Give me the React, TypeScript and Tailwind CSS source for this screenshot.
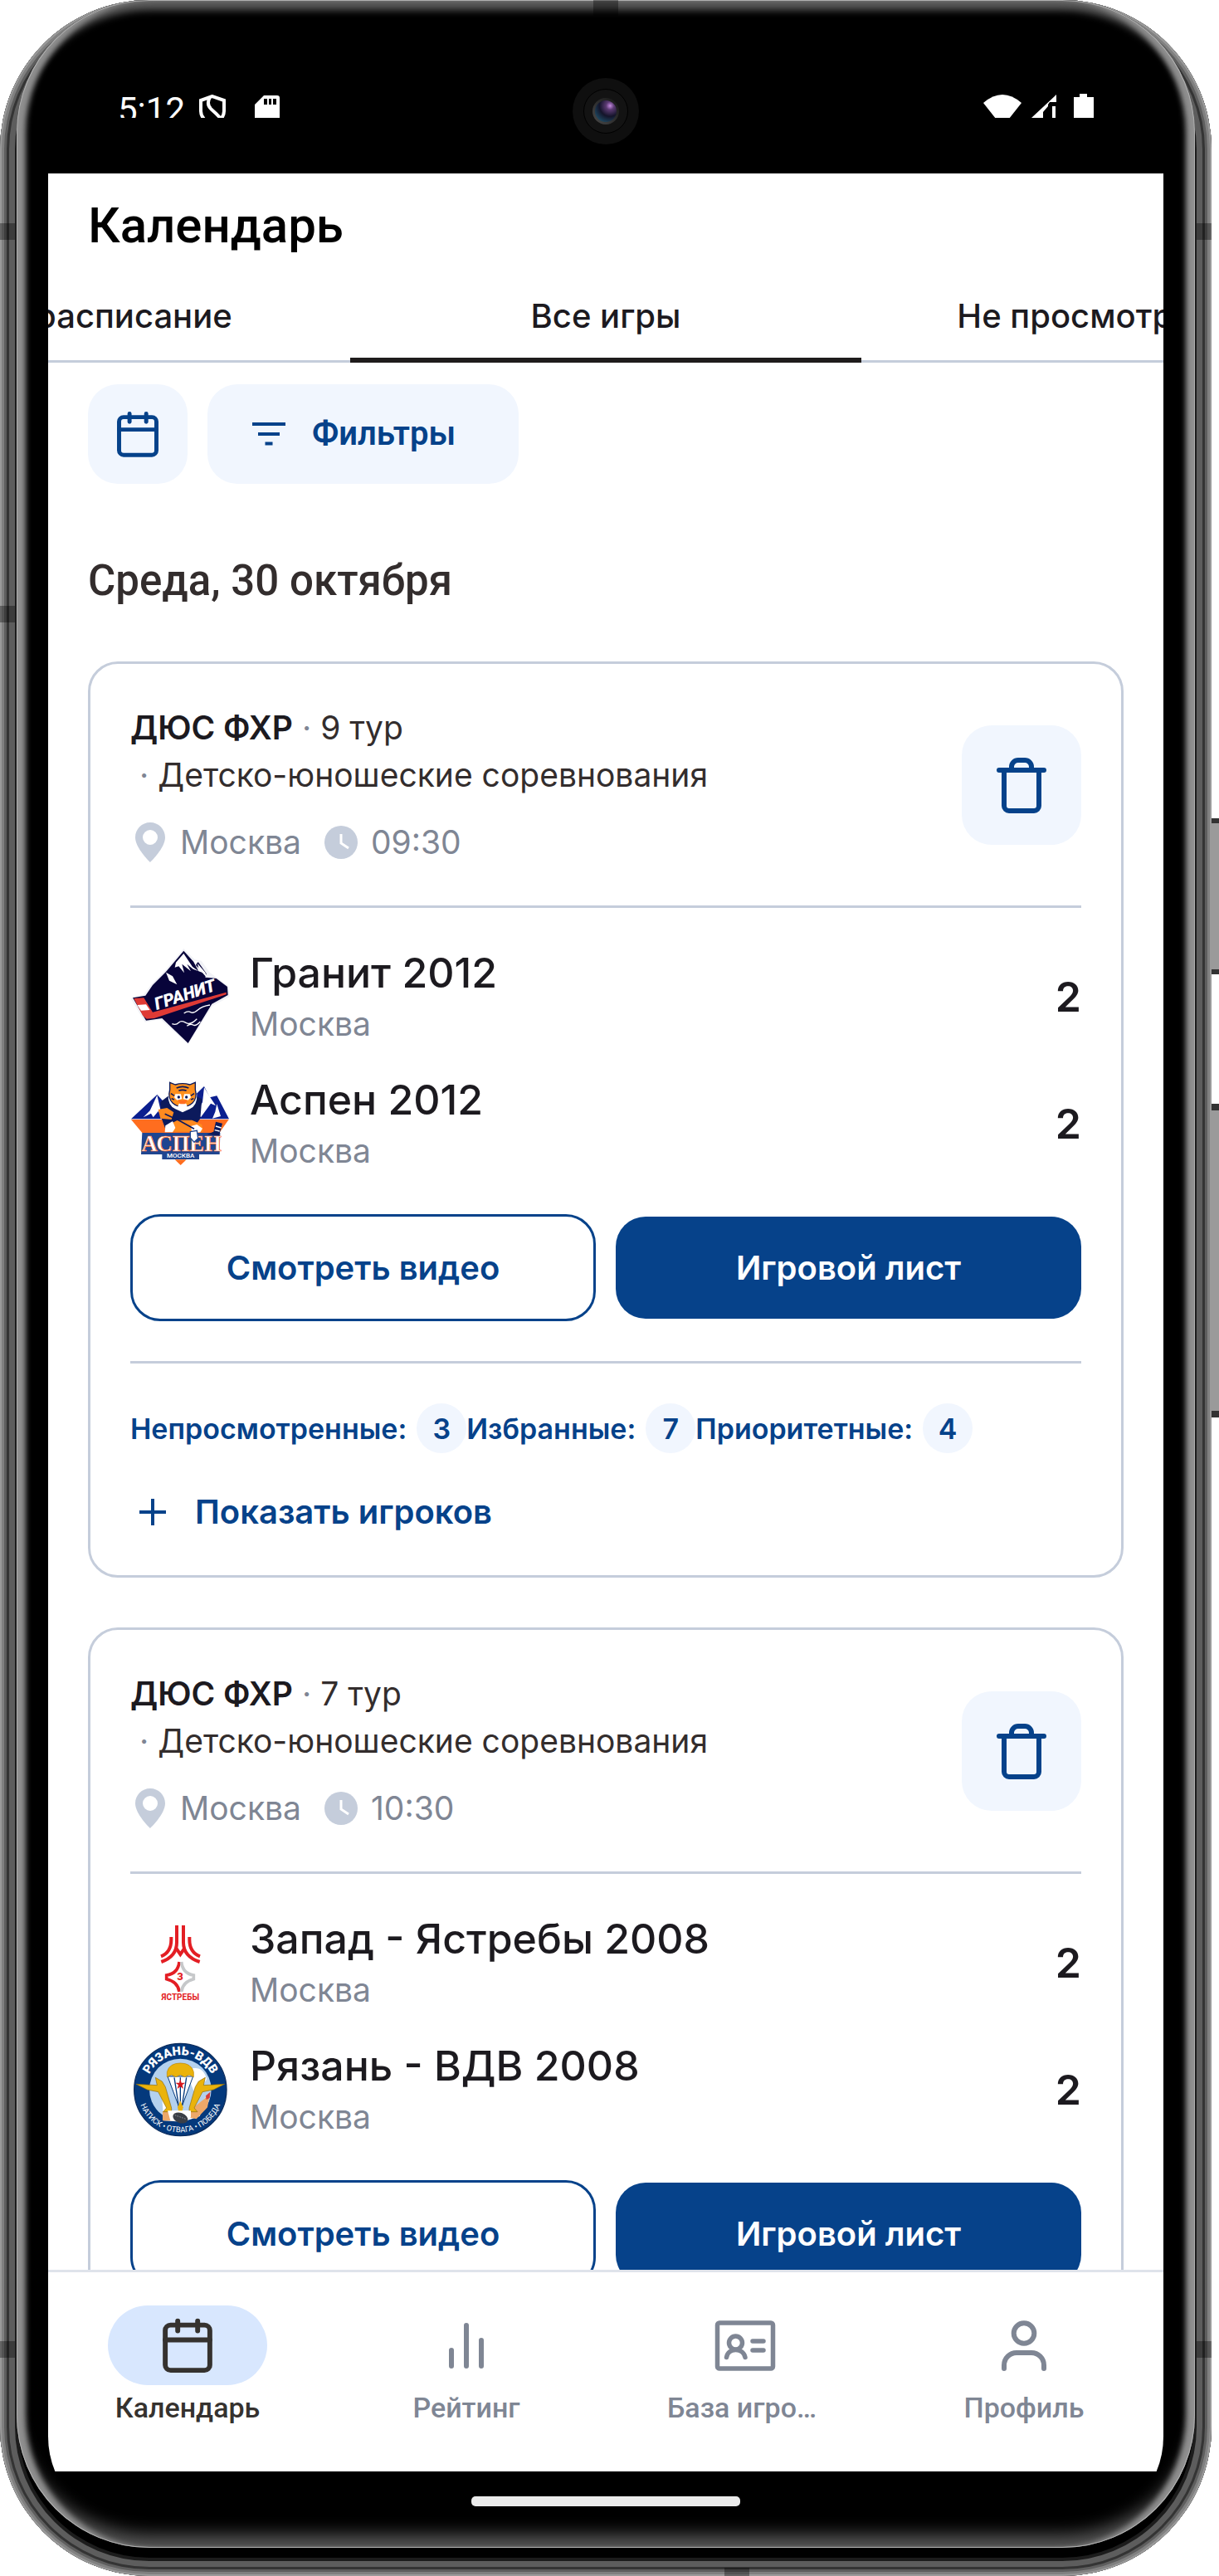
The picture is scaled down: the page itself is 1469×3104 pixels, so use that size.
import React, { useState } from 'react';

type Team = {
    name: string;
    city: string;
    score: number;
    logo: React.ReactNode;
};

type Game = {
    league: string;
    tour: string;
    category: string;
    city: string;
    time: string;
    teams: Team[];
    stats?: { label: string; count: number }[];
};

function CalendarIcon({ className }: { className: string }) {
    return (
        <svg
            viewBox="0 0 24 24"
            className={className}
            fill="none"
            stroke="currentColor"
            strokeWidth="1.65"
            strokeLinecap="round"
            aria-hidden="true"
        >
            <rect x="4.5" y="5.2" width="15" height="15.2" rx="1.8" />
            <path d="M4.5 10.2h15M8.7 3.8v3.3M15.4 3.8v3.3" />
        </svg>
    );
}

function FilterIcon() {
    return (
        <svg
            viewBox="0 0 40 30"
            className="h-[30px] w-[40px]"
            stroke="currentColor"
            strokeWidth="4"
            aria-hidden="true"
        >
            <path d="M0 3h40M7 15h26M15.500 26.500h9" />
        </svg>
    );
}

function TrashIcon() {
    return (
        <svg
            viewBox="0 0 72 72"
            className="size-[72px]"
            fill="none"
            stroke="currentColor"
            strokeWidth="6"
            strokeLinecap="round"
            aria-hidden="true"
        >
            <path d="M9 18h54M15 18v43a6 6 0 0 0 6 6h30a6 6 0 0 0 6-6V18M24 17v-3a8 8 0 0 1 8-8h8a8 8 0 0 1 8 8v3" />
        </svg>
    );
}

function PinIcon() {
    return (
        <svg
            viewBox="0 0 48 48"
            className="size-12 text-[#c5cddb]"
            fill="currentColor"
            aria-hidden="true"
        >
            <path
                fillRule="evenodd"
                d="M24 0C14 0 6 8 6 18c0 13 18 30 18 30s18-17 18-30C42 8 34 0 24 0Zm0 9a9 9 0 1 1 0 18 9 9 0 0 1 0-18Z"
            />
        </svg>
    );
}

function ClockIcon() {
    return (
        <svg viewBox="0 0 40 40" className="size-10" aria-hidden="true">
            <circle cx="20" cy="20" r="20" fill="#c5cddb" />
            <path
                d="M20 10v11l9 6"
                fill="none"
                stroke="white"
                strokeWidth="3"
            />
        </svg>
    );
}

function PlusIcon() {
    return (
        <svg
            viewBox="0 0 54 32"
            className="h-8 w-[54px]"
            stroke="currentColor"
            strokeWidth="4"
            aria-hidden="true"
        >
            <path d="M11 16h32M27 0v32" />
        </svg>
    );
}

function RatingIcon() {
    return (
        <svg
            viewBox="0 0 86 86"
            className="size-[86px]"
            stroke="currentColor"
            strokeWidth="6"
            strokeLinecap="round"
            aria-hidden="true"
        >
            <path d="M25 49v19M43 19v49M61 37v31" />
        </svg>
    );
}

function PlayersIcon() {
    return (
        <svg
            viewBox="0 0 86 86"
            className="size-[86px]"
            fill="none"
            stroke="currentColor"
            strokeWidth="5.500"
            strokeLinecap="round"
            aria-hidden="true"
        >
            <rect x="9.500" y="16" width="67" height="55" rx="2.500" />
            <circle cx="31.500" cy="40" r="8" />
            <path d="M20.500 57.500c2-12 20-12 22.500 0M52 38h13M52 49h13" />
        </svg>
    );
}

function ProfileIcon() {
    return (
        <svg
            viewBox="0 0 86 86"
            className="size-[86px]"
            fill="none"
            stroke="currentColor"
            strokeWidth="6"
            strokeLinecap="round"
            aria-hidden="true"
        >
            <circle cx="43" cy="28.500" r="12.300" />
            <path d="M19 71v-4a15 15 0 0 1 15-15h18a15 15 0 0 1 15 15v4" />
        </svg>
    );
}

function GranitLogo() {
    return (
        <svg viewBox="21 36 360 360" className="size-[120px]" aria-hidden="true">
            <path
                d="M214 42 254 82l24 4 30 42 66 48 6 40-62 34-88 138-100-90-56 10-52-86 48-14 28-38 50-50Z"
                fill="#f1f2f6"
            />
            <path
                d="M214 50 248 88l20 4 28 40-4 14 40 4 40 30 2 30-58 32-86 142-94-90-58 8-48-82 46-8 26-38 48-48Z"
                fill="#08043a"
            />
            <path
                d="m214 60-28 32-4 18 14-4 20 24-8-32 32 26-14-26 22 18 36 14-26-28 8-14-18-2 20 38-22-16Z"
                fill="white"
            />
            <path d="m150 128 12 30 28 14-16-30ZM264 96l28 32 6 20-30-34Z" fill="white" />
            <path
                d="m34 222 36-2 32 52 266-72v8L108 294l-28 2-14-12Z"
                fill="#df3a35"
            />
            <path d="m46 246 32-2 14 20-32 2Z" fill="white" />
            <path
                d="M215 276q14-10 24-4t26-8 44-18M172 314q14 6 24-4t26 0 40-14M226 322q12-10 22-4t26-12"
                fill="none"
                stroke="white"
                strokeWidth="4"
            />
            <text
                x="0"
                y="0"
                transform="translate(116 264) rotate(-18)"
                className="fill-white font-['Roboto'] text-[62px] font-black italic"
            >
                ГРАНИТ
            </text>
        </svg>
    );
}

function AspenLogo() {
    return (
        <svg viewBox="21 495 360 360" className="size-[120px]" aria-hidden="true">
            <path
                d="m24 658 94-88 28 30 70 10 72-70 20 40 26-6 44 84Z"
                fill="#0b1f8f"
            />
            <path
                d="m118 572-26 56-24 24 28-14 8 14 18-22 14 18ZM288 544l-6 54-22 36 16 18 36-50 18 8-24-36ZM334 604l14 44-30 8 10-24Z"
                fill="white"
            />
            <path d="M24 660h353l-34 48H64Z" fill="#ff6d1f" />
            <path
                d="m130 596 40-30h70l40 20-6 70-30 44H150l-18-50Z"
                fill="#0c1a5c"
            />
            <path
                d="M122 624l32-6 24 16-8 26-40-4ZM150 684l42-22 52 0 36 16 4 26H150Z"
                fill="#ff8a1f"
            />
            <path d="M148 682l26-16 10 24-10 16h-28ZM240 684l22-6 20 14-8 14-30 4Z" fill="white" />
            {/* tiger head: fur collar, face, ears, muzzle */}
            <path d="M158 568q-2 42 26 54l26 12 26-12q28-12 26-54Z" fill="white" />
            <path
                d="M164 526l20 8q26-8 52 0l20-8v26q8 30-10 48-16 14-36 14t-36-14q-18-18-10-48Z"
                fill="#ff8f1d"
                stroke="#0c1a5c"
                strokeWidth="4"
            />
            <path d="M184 568h20l4 18-18 4-10-10ZM236 568h-20l-4 18 18 4 10-10Z" fill="white" />
            <path d="M196 604q14-10 28 0l4 14q-18 10-36 0Z" fill="white" />
            <path d="M192 590h36l-10 14h-16Z" fill="#ff6d1f" />
            <path
                d="M188 546q22-10 44 0M196 556q14-6 28 0M168 566l12 8M252 566l-12 8M170 584l10 4M250 584l-10 4M146 640l52 24M198 664l54 30"
                fill="none"
                stroke="#0c1a5c"
                strokeWidth="5"
            />
            <circle cx="196" cy="579" r="5" fill="#0c1a5c" />
            <circle cx="224" cy="579" r="5" fill="#0c1a5c" />
            <path d="M64 708h282l-2 78h-74v18H136v-18H60Z" fill="#1f4590" />
            <path d="m330 668 24 6-12 44-44-4 24-10Z" fill="#0c1a5c" />
            <path d="m330 684 20 6M326 698l18 4" stroke="white" strokeWidth="4" />
            <text
                x="206"
                y="773"
                textAnchor="middle"
                strokeWidth="2"
                className="fill-white stroke-[#ff6d1f] font-['Liberation_Serif'] text-[80px] font-bold"
            >
                АСПЕН
            </text>
            <path d="m238 704 24-4 4 28-14 14-14-16Z" fill="white" stroke="#1f4590" strokeWidth="4" />
            <text
                x="203"
                y="797"
                textAnchor="middle"
                className="fill-white font-['Roboto'] text-[24px] font-medium"
            >
                МОСКВА
            </text>
            <path d="M182 805h42l-21 20Z" fill="#ff6d1f" />
        </svg>
    );
}

function YastrebyLogo() {
    return (
        <svg viewBox="51 48 360 360" className="size-[120px]" aria-hidden="true">
            <g fill="none" stroke="#e31e24" strokeWidth="12">
                <path d="M219 93v62q0 50-56 70M243 93v62q0 50 59 70" />
                <path d="M199 135v10q0 46-37 60M265 135v10q0 46 38 60" />
                <path d="m217 176 15 22 15-22" />
            </g>
            <path
                d="M228 225q-4 42-46 48v14q42 10 46 46"
                fill="none"
                stroke="#e31e24"
                strokeWidth="11"
            />
            <path
                d="M236 225q4 42 44 48v14q-40 10-44 46"
                fill="none"
                stroke="#c6c8ca"
                strokeWidth="11"
            />
            <text
                x="231"
                y="291"
                textAnchor="middle"
                className="fill-[#e31e24] font-['Roboto'] text-[36px] font-black"
            >
                З
            </text>
            <text
                x="232"
                y="363"
                textAnchor="middle"
                className="fill-[#e31e24] font-['Roboto'] text-[30px] font-bold"
            >
                ЯСТРЕБЫ
            </text>
        </svg>
    );
}

function RyazanLogo() {
    return (
        <svg viewBox="51 508 360 360" className="size-[120px]" aria-hidden="true">
            <circle cx="232" cy="688" r="167" fill="#04397c" stroke="#0a2b5c" strokeWidth="4" />
            <circle cx="232" cy="688" r="112" fill="#b4d1ee" />
            <path d="M250 620q60-30 78 30l-40 60ZM166 720l30 44h90l46-60-30 80-60 20-70-4Z" fill="white" />
            <path d="m168 766 50 0v34h-50ZM270 760l50-40 20-24-10 56-40 42-30-6Z" fill="#eda869" />
            <path d="m324 710 16-14-2 22-12 6Z" fill="#d43b3b" />
            <path d="m186 640 46 124 46-124Z" fill="white" stroke="#04397c" strokeWidth="3" />
            <path
                d="M232 644v116M210 644l18 116M254 644l-18 116"
                stroke="#04397c"
                strokeWidth="4"
            />
            <path
                d="M184 642v-18q8-32 48-32t48 32v18l-16-8-16 8-16-8-16 8-16-8Z"
                fill="#eab30c"
                stroke="#b98300"
                strokeWidth="2"
            />
            <path
                d="m72 668 76 4-6-28 24 14 12 20 22 76v14h-30l12-14-30-58-40-8ZM392 668l-76 4 6-28-24 14-12 20-22 76v14h30l-12-14 30-58 40-8Z"
                fill="#eab30c"
                stroke="#8a6a10"
                strokeWidth="2"
            />
            <path d="m222 752 10-24 10 24-4 16h-12Z" fill="#eab30c" />
            <path
                d="m232 650 4 13h14l-11 8 4 14-11-8-11 8 4-14-11-8h14Z"
                fill="#d5161c"
            />
            <path d="M186 764h84v24l-20 12h-54Z" fill="white" />
            <ellipse cx="232" cy="790" rx="28" ry="18" transform="rotate(20 232 790)" fill="#3a3f47" />
            <path d="m212 780 40 14" stroke="#8b9098" strokeWidth="3" strokeDasharray="5 4" />
            <defs>
                <path id="ryazanTop" d="M107 688a125 125 0 0 1 250 0" />
                <path id="ryazanBottom" d="M78 688a154 154 0 0 0 308 0" />
            </defs>
            <text
                textAnchor="middle"
                className="fill-white font-['Roboto'] text-[44px] font-black"
            >
                <textPath href="#ryazanTop" startOffset="50%">
                    РЯЗАНЬ-ВДВ
                </textPath>
            </text>
            <text
                textAnchor="middle"
                className="fill-white font-['Roboto'] text-[28px]"
            >
                <textPath href="#ryazanBottom" startOffset="50%">
                    НАТИСК • ОТВАГА • ПОБЕДА
                </textPath>
            </text>
        </svg>
    );
}

const games: Game[] = [
    {
        league: 'ДЮС ФХР',
        tour: '9 тур',
        category: 'Детско-юношеские соревнования',
        city: 'Москва',
        time: '09:30',
        teams: [
            { name: 'Гранит 2012', city: 'Москва', score: 2, logo: <GranitLogo /> },
            { name: 'Аспен 2012', city: 'Москва', score: 2, logo: <AspenLogo /> },
        ],
        stats: [
            { label: 'Непросмотренные:', count: 3 },
            { label: 'Избранные:', count: 7 },
            { label: 'Приоритетные:', count: 4 },
        ],
    },
    {
        league: 'ДЮС ФХР',
        tour: '7 тур',
        category: 'Детско-юношеские соревнования',
        city: 'Москва',
        time: '10:30',
        teams: [
            { name: 'Запад - Ястребы 2008', city: 'Москва', score: 2, logo: <YastrebyLogo /> },
            { name: 'Рязань - ВДВ 2008', city: 'Москва', score: 2, logo: <RyazanLogo /> },
        ],
    },
];

const tabs = ['Мое расписание', 'Все игры', 'Не просмотренные'];

const navItems = [
    { label: 'Календарь', icon: <CalendarIcon className="size-[86px]" /> },
    { label: 'Рейтинг', icon: <RatingIcon /> },
    { label: 'База игроков', icon: <PlayersIcon /> },
    { label: 'Профиль', icon: <ProfileIcon /> },
];

function StatusBar() {
    return (
        <div className="h-[209px] shrink-0">
            <div className="flex h-[142px] items-start justify-between overflow-hidden pt-[112px] pr-[84px] pl-[84px] text-white">
                <div className="flex items-start">
                    <span className="font-['Roboto'] text-[42px] leading-[42px]">
                        5:12
                    </span>
                    <svg
                        viewBox="0 0 34 40"
                        className="ml-[16px] h-[40px] w-[34px] shrink-0"
                        fill="none"
                        stroke="white"
                        strokeWidth="4"
                        aria-hidden="true"
                    >
                        <path d="M17 4 3 9v13q0 10 14 16 14-6 14-16V9ZM14 5q-5 9 2 15t12 12" />
                    </svg>
                    <svg
                        viewBox="0 0 30 40"
                        className="ml-[34px] h-[40px] w-[30px] shrink-0"
                        fill="white"
                        aria-hidden="true"
                    >
                        <path
                            fillRule="evenodd"
                            d="M11 3h16q3 0 3 3v34H0V14Zm0 4v7h4V7Zm6 0v7h3V7Zm5 0v7h4V7Z"
                        />
                    </svg>
                </div>
                <div className="flex items-start fill-white">
                    <svg viewBox="0 0 46 40" className="h-[40px] w-[46px]" aria-hidden="true">
                        <path d="M0 12Q23-8 46 12L31 31H15Z" />
                    </svg>
                    <svg
                        viewBox="0 0 30 40"
                        className="ml-[12px] h-[40px] w-[30px]"
                        aria-hidden="true"
                    >
                        <path d="M30 2v9h-8L13 24v6H0ZM0 30 20 12v4l-6 7v7ZM25 16h4v14h-4Z" />
                    </svg>
                    <svg
                        viewBox="0 0 24 40"
                        className="ml-[21px] h-[40px] w-[24px]"
                        aria-hidden="true"
                    >
                        <path d="M7 1h9v4h8v35H0V5h7Z" />
                    </svg>
                </div>
            </div>
        </div>
    );
}

function TeamRow({ team }: { team: Team }) {
    return (
        <div className="flex h-[123px] items-center">
            {team.logo}
            <div className="ml-6 flex-1">
                <h3 className="text-[50px] leading-[66px] font-medium">
                    {team.name}
                </h3>
                <p className="text-[39px] leading-[57px] text-[#7f8694]">
                    {team.city}
                </p>
            </div>
            <span className="text-[50px] leading-[66px] font-semibold">
                {team.score}
            </span>
        </div>
    );
}

function GameCard({ game }: { game: Game }) {
    return (
        <article className="shrink-0 rounded-[36px] border-[3px] border-[#c5cddb] p-12 text-[#1c1a1f]">
            <div className="flex items-center justify-between">
                <div className="text-[39px] leading-[57px]">
                    <p>
                        <span className="font-semibold">{game.league}</span>
                        <span className="text-[#7f8694]"> · </span>
                        <span className="text-[#332d2d]">{game.tour}</span>
                    </p>
                    <p className="pl-[11px] text-[#332d2d]">
                        <span className="text-[#7f8694]">· </span>
                        {game.category}
                    </p>
                    <div className="mt-6 flex items-center text-[#7f8694]">
                        <PinIcon />
                        <span className="mr-[28px] ml-3">{game.city}</span>
                        <ClockIcon />
                        <span className="ml-4">{game.time}</span>
                    </div>
                </div>
                <button
                    type="button"
                    aria-label="Удалить"
                    className="flex size-[144px] items-center justify-center rounded-[36px] bg-[#f1f6fe] text-[#06428a]"
                >
                    <TrashIcon />
                </button>
            </div>
            <hr className="mt-12 mb-[45px] border-t-[3px] border-[#c5cddb]" />
            <div className="flex flex-col gap-[30px]">
                {game.teams.map((team) => (
                    <TeamRow key={team.name} team={team} />
                ))}
            </div>
            <div className="mt-12 grid grid-cols-2 items-center gap-6 text-[40px] font-semibold">
                <button
                    type="button"
                    className="h-[129px] rounded-[36px] border-[3px] border-[#06428a] text-[#06428a]"
                >
                    Смотреть видео
                </button>
                <button
                    type="button"
                    className="h-[123px] rounded-[36px] bg-[#06428a] text-white"
                >
                    Игровой лист
                </button>
            </div>
            {game.stats ? (
                <>
                    <hr className="my-12 border-t-[3px] border-[#c5cddb]" />
                    <div className="flex items-center text-[34px] font-semibold text-[#06428a]">
                        {game.stats.map((stat) => (
                            <div
                                key={stat.label}
                                className="flex items-center gap-3"
                            >
                                {stat.label}
                                <span className="flex size-[60px] items-center justify-center rounded-full bg-[#f1f6fe]">
                                    {stat.count}
                                </span>
                            </div>
                        ))}
                    </div>
                    <button
                        type="button"
                        className="mt-[42px] flex items-center gap-6 text-[40px] leading-[57px] font-semibold text-[#06428a]"
                    >
                        <PlusIcon />
                        Показать игроков
                    </button>
                </>
            ) : null}
        </article>
    );
}

function CalendarScreen() {
    const [activeTab, setActiveTab] = useState(1);
    const [activeNav, setActiveNav] = useState(0);

    return (
        <>
            <header className="shrink-0 bg-white">
                <h1 className="flex h-[126px] items-center px-12 font-['Roboto'] text-[60px] font-medium text-black">
                    Календарь
                </h1>
                <div
                    role="tablist"
                    className="flex justify-center overflow-hidden text-[40px] font-medium text-[#1c1a1f]"
                >
                    {tabs.map((tab, i) => (
                        <button
                            key={tab}
                            type="button"
                            role="tab"
                            aria-selected={i === activeTab}
                            onClick={() => setActiveTab(i)}
                            className={
                                'h-[102px] w-[616px] shrink-0 ' +
                                (i === activeTab
                                    ? 'border-b-[6px] border-[#1f1c1c] pb-1'
                                    : 'border-b-[3px] border-[#c5cddb] pb-[7px]')
                            }
                        >
                            {tab}
                        </button>
                    ))}
                </div>
            </header>
            <main className="flex min-h-0 flex-1 flex-col overflow-hidden bg-white px-12">
                <div className="mt-[26px] flex shrink-0 gap-6 text-[#06428a]">
                    <button
                        type="button"
                        aria-label="Выбрать дату"
                        className="flex size-[120px] items-center justify-center rounded-[36px] bg-[#f1f6fe]"
                    >
                        <CalendarIcon className="size-[72px]" />
                    </button>
                    <button
                        type="button"
                        className="flex h-[120px] w-[375px] items-center gap-8 rounded-[36px] bg-[#f1f6fe] pl-[54px] font-['Roboto'] text-[40px] font-semibold"
                    >
                        <FilterIcon />
                        Фильтры
                    </button>
                </div>
                <h2 className="mt-[81px] mb-[61px] shrink-0 font-['Roboto'] text-[51px] leading-[72px] font-medium text-[#332d2d]">
                    Среда, 30 октября
                </h2>
                <div className="flex flex-col gap-[60px]">
                    {games.map((game) => (
                        <GameCard key={game.time} game={game} />
                    ))}
                </div>
            </main>
            <nav className="flex h-[243px] shrink-0 border-t-[3px] border-[#dfe3eb] bg-white pt-10 font-['Roboto'] text-[34px] leading-[54px] font-medium">
                {navItems.map((item, i) => (
                    <button
                        key={item.label}
                        type="button"
                        onClick={() => setActiveNav(i)}
                        className={
                            'flex min-w-0 flex-1 flex-col items-center ' +
                            (i === activeNav ? 'text-[#35322f]' : 'text-[#7f8694]')
                        }
                    >
                        <span
                            className={
                                'flex h-24 w-48 items-center justify-center rounded-full ' +
                                (i === activeNav ? 'bg-[#d8e7fe]' : '')
                            }
                        >
                            {item.icon}
                        </span>
                        <span className="max-w-[188px] truncate">{item.label}</span>
                    </button>
                ))}
            </nav>
        </>
    );
}

function Camera() {
    return (
        <div className="absolute top-[94px] left-1/2 flex size-20 -translate-x-1/2 items-center justify-center rounded-full bg-[#0f0f0f]">
            <div className="flex size-[54px] items-center justify-center rounded-full border border-black bg-[#131313]">
                <div className="flex size-8 items-center justify-center rounded-full bg-linear-to-tr from-[#4a4a4a] to-[#151515]">
                    <div className="size-[26px] rounded-full bg-[radial-gradient(circle_at_70%_25%,#c58be0_0%,#5b3a72_18%,#14142a_48%,#1f5068_85%,#0c1a24_100%)]" />
                </div>
            </div>
        </div>
    );
}

export default function App() {
    return (
        <div className="relative h-screen overflow-hidden bg-white pr-[9px] font-['Inter',sans-serif]">
            {/* volume and power keys */}
            <div className="absolute top-[986px] right-0 h-[188px] w-[10px] border-y-[6px] border-[#333] bg-[#9a9a9a]" />
            <div className="absolute top-[1330px] right-0 h-[378px] w-[10px] border-y-[8px] border-[#333] bg-[#9a9a9a]" />

            <div className="relative h-full overflow-hidden rounded-[180px] bg-black px-5 pt-[22px] pb-3 shadow-[inset_0_0_0_2px_#9a9a9a,inset_0_0_0_5px_#808080,inset_0_0_0_8px_#5e5e5e,inset_0_0_0_11px_#343434,inset_0_0_0_18px_#5d5d5d,inset_0_0_0_22px_#1c1c1c]">
                <div className="h-full rounded-[160px] bg-black px-[38px] pb-[46px] shadow-[inset_0_0_0_1px_#b0b0b0,inset_13px_0_6px_-2px_#8f8f8f,inset_-13px_0_6px_-2px_#8f8f8f,inset_0_16px_10px_-4px_#5c5c5c,inset_0_-22px_20px_-6px_#555555]">
                    <div className="-mt-[22px] flex h-[calc(100%+22px)] flex-col overflow-hidden rounded-b-[110px]">
                        <StatusBar />
                        <CalendarScreen />
                        <div className="flex h-[68px] shrink-0 justify-center pt-[30px]">
                            <div className="h-3 w-[324px] rounded-[5px] bg-[#ebebeb]" />
                        </div>
                    </div>
                </div>

                <Camera />

                {/* speaker slit and antenna bands */}
                <div className="absolute inset-x-[350px] top-[21px] h-[5px] bg-black" />
                <div className="absolute top-0 left-1/2 h-[19px] w-[30px] -translate-x-1/2 bg-black/35" />
                <div className="absolute top-[269px] left-0 h-5 w-[18px] bg-black/35" />
                <div className="absolute top-[269px] right-0 h-5 w-[18px] bg-black/35" />
                <div className="absolute top-[730px] left-0 h-5 w-[18px] bg-black/35" />
                <div className="absolute bottom-[263px] left-0 h-5 w-[18px] bg-black/35" />
                <div className="absolute right-0 bottom-[263px] h-5 w-[18px] bg-black/35" />
                <div className="absolute right-[557px] bottom-0 h-[10px] w-[30px] bg-black/35" />
            </div>
        </div>
    );
}
